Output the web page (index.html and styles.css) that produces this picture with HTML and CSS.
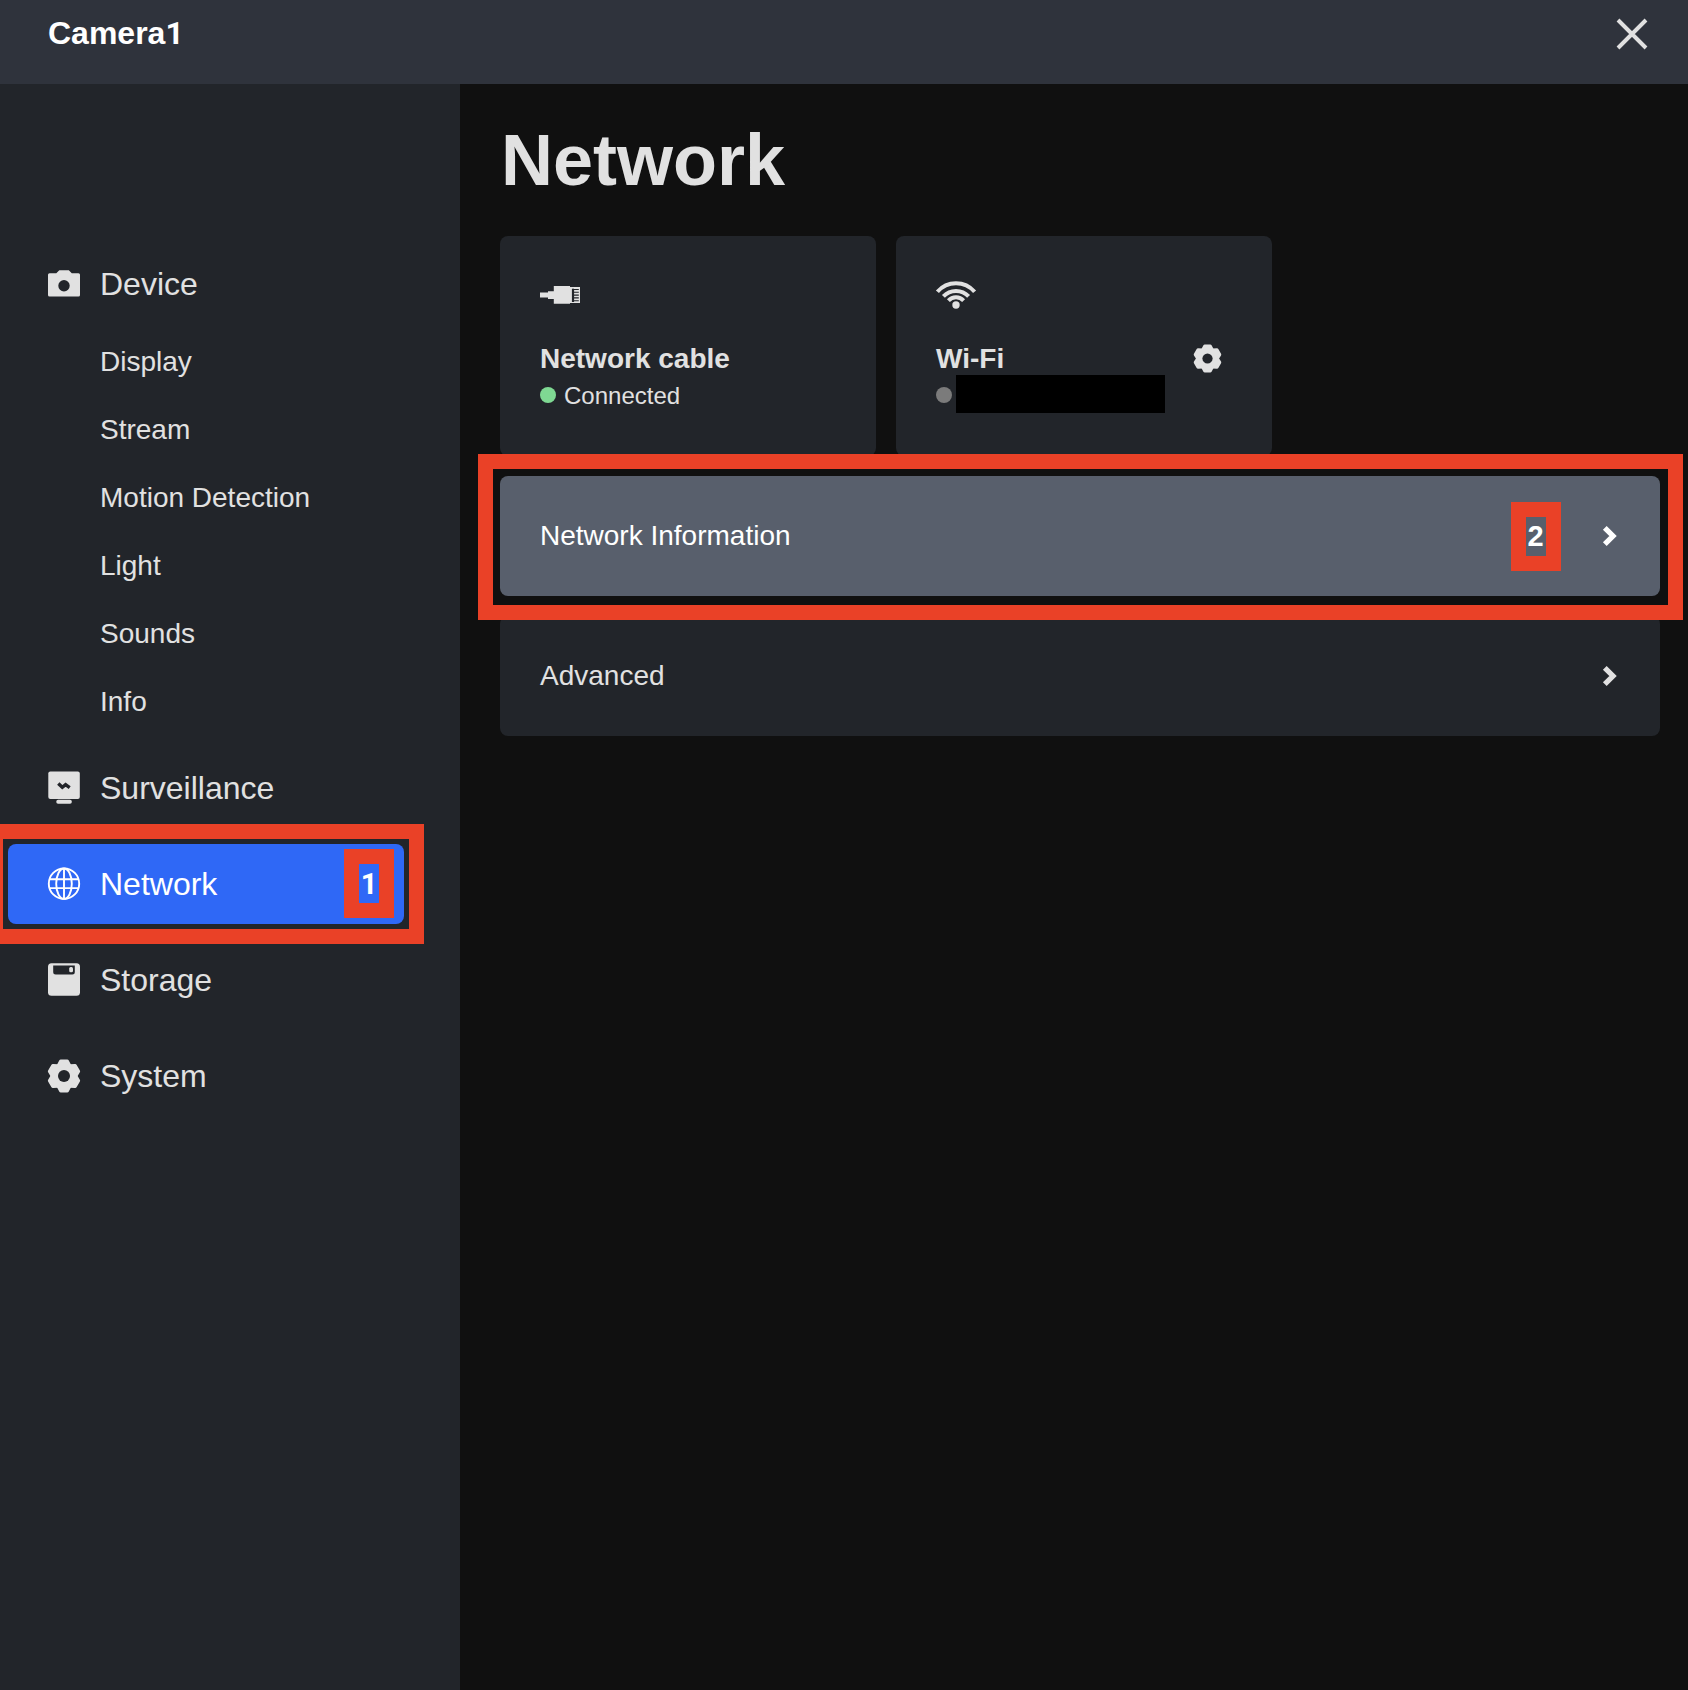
FILE: index.html
```html
<!DOCTYPE html>
<html lang="en">
<head>
<meta charset="utf-8">
<title>Camera1</title>
<link rel="stylesheet" href="styles.css">
</head>
<body>
<svg class="defs" aria-hidden="true">
  <mask id="gear-hole"><rect x="-20" y="-20" width="40" height="40" fill="#fff"/><circle r="6" fill="#000"/></mask>
  <symbol id="gear" viewBox="-17 -17 34 34">
    <g mask="url(#gear-hole)" fill="currentColor" stroke="currentColor" stroke-width="3.6" stroke-linejoin="round">
      <path id="tooth" d="M-3.2-14.7H3.2L5.7-10V10L3.2 14.7H-3.2L-5.7 10V-10Z"/>
      <use href="#tooth" transform="rotate(60)"/>
      <use href="#tooth" transform="rotate(120)"/>
    </g>
  </symbol>
  <symbol id="chevron" viewBox="0 0 20 24">
    <path d="M4.8 3.8 13 12 4.8 20.2" fill="none" stroke="currentColor" stroke-width="5.3"/>
  </symbol>
</svg>
<header class="header">
  <div class="device-name">Camera<span class="digit">1</span></div>
  <svg class="close" viewBox="0 0 32 32"><path d="M2 2 30 30M30 2 2 30" fill="none" stroke="currentColor" stroke-width="3.9"/></svg>
</header>
<div class="body">
  <nav class="sidebar">
    <a class="item">
      <svg class="icon" viewBox="0 0 32 32"><path fill="currentColor" fill-rule="evenodd" d="M1.5 5.3H8.3L11.3 2.2H20.8L23.8 5.3H30.5A1.5 1.5 0 0 1 32 6.8V27A1.5 1.5 0 0 1 30.5 28.500H1.500A1.500 1.500 0 0 1 0 27V6.800A1.500 1.500 0 0 1 1.500 5.300ZM16 12A5.700 5.700 0 1 0 16 23.400A5.700 5.700 0 1 0 16 12Z"/></svg>
      <span>Device</span>
    </a>
    <div class="subitems">
      <a class="subitem">Display</a>
      <a class="subitem">Stream</a>
      <a class="subitem">Motion Detection</a>
      <a class="subitem">Light</a>
      <a class="subitem">Sounds</a>
      <a class="subitem">Info</a>
    </div>
    <div class="group">
      <a class="item">
        <svg class="icon" viewBox="0 0 32 32"><rect x=".3" y="-.6" width="31.500" height="27.500" rx="2" fill="currentColor"/><rect x="8.300" y="27.800" width="15.500" height="4" rx="1.800" fill="currentColor"/><path d="M10.300 11.500 14.300 15.300 17.600 12.700 21.700 15.600" fill="none" stroke="#22252a" stroke-width="3.400"/></svg>
        <span>Surveillance</span>
      </a>
      <a class="item active">
        <svg class="icon" viewBox="0 0 32 32"><g fill="none" stroke="currentColor" stroke-width="1.900"><circle cx="16" cy="15.700" r="15.200"/><ellipse cx="16" cy="15.700" rx="7.800" ry="15.200"/><path d="M16 .5V31M2 11.200H30M2 20.100H30"/></g></svg>
        <span>Network</span>
        <span class="frame frame-nav"></span>
        <span class="badge badge-one">1</span>
      </a>
      <a class="item">
        <svg class="icon" viewBox="0 0 32 32"><rect y="-.7" width="32" height="32.500" rx="3.500" fill="currentColor"/><path d="M5.200 1.500H26.800V8A2.500 2.500 0 0 1 24.300 10.500H7.700A2.500 2.500 0 0 1 5.200 8Z" fill="#22252a"/><rect x="21.200" y="3" width="3.800" height="5.300" rx="1.500" fill="currentColor"/></svg>
        <span>Storage</span>
      </a>
      <a class="item">
        <svg class="icon gear"><use href="#gear"/></svg>
        <span>System</span>
      </a>
    </div>
  </nav>
  <main class="main">
    <h1 class="title">Network</h1>
    <section class="cards">
      <div class="card">
        <svg class="card-icon" viewBox="0 0 40 40"><path fill="currentColor" d="M0 16.500H8V15.300H13.800V10H30V11H40V27H30V27.700H13.800V23H8V21.600H0Z"/><path d="M33 12.700V26" stroke="#22252a" stroke-width="2.200"/><path d="M34 13.500H38.800M34 16.300H38.800M34 19.100H38.800M34 21.900H38.800M34 24.700H38.800" stroke="#22252a" stroke-width="1.100"/></svg>
        <div class="card-title">Network cable</div>
        <div class="status"><i class="dot on"></i><span class="status-text">Connected</span></div>
      </div>
      <div class="card">
        <svg class="card-icon" viewBox="0 0 40 40"><g fill="none" stroke="currentColor" stroke-width="4"><path d="M1.400 15.800A24.500 24.500 0 0 1 38.600 15.800"/><path d="M7.400 20.400A17.200 17.200 0 0 1 32.600 20.400"/><path d="M12.400 24.600A10.500 10.500 0 0 1 27.600 24.600"/></g><circle cx="20" cy="29" r="3.700" fill="currentColor"/></svg>
        <div class="card-title">Wi-Fi<svg class="settings"><use href="#gear"/></svg></div>
        <div class="status wifi-status"><i class="dot"></i><span class="redacted"></span></div>
      </div>
    </section>
    <section class="rows">
      <a class="row selected">
        <span>Network Information</span>
        <svg class="chevron"><use href="#chevron"/></svg>
        <span class="frame frame-row"></span>
        <span class="badge badge-two">2</span>
      </a>
      <a class="row">
        <span>Advanced</span>
        <svg class="chevron"><use href="#chevron"/></svg>
      </a>
    </section>
  </main>
</div>
</body>
</html>
```
FILE: styles.css
```css
* { box-sizing: border-box; }

body {
  margin: 0;
  height: 1690px;
  display: flex;
  flex-direction: column;
  overflow: hidden;
  background: #101010;
  color: #e1e1e1;
  font-family: "Liberation Sans", Arial, sans-serif;
}

svg { display: block; flex: none; overflow: visible; }
.defs { position: absolute; width: 0; height: 0; }

.header {
  flex: none;
  display: flex;
  justify-content: space-between;
  align-items: center;
  height: 84px;
  padding: 0 40px 17px 48px;
  background: #2f333c;
}

.device-name {
  padding-bottom: 2px;
  color: #fff;
  font-size: 32px;
  font-weight: 700;
  line-height: 36px;
}

/* a plain 1, with no foot */
.digit { font-family: Roboto, sans-serif; }

.close { width: 32px; height: 32px; }

.body { flex: 1; display: flex; min-height: 0; }

.sidebar {
  flex: none;
  width: 460px;
  padding: 160px 56px 0 8px;
  background: #22252a;
}

.item {
  position: relative;
  display: flex;
  align-items: center;
  gap: 20px;
  height: 80px;
  padding-left: 40px;
  border-radius: 8px;
  font-size: 32px;
}

.item.active { background: #2f68f6; color: #fff; }

.icon { width: 32px; height: 32px; }
.icon.gear { width: 34px; height: 34px; margin: 0 -1px 1px -1px; }

.subitems { padding: 4px 0 12px 92px; }

.subitem {
  display: flex;
  align-items: center;
  height: 68px;
  font-size: 28px;
}

.group { display: flex; flex-direction: column; gap: 16px; }

.main { flex: 1; padding: 36px 28px 0 40px; }

.title {
  margin: 0 0 36px;
  padding-left: 1px;
  font-size: 72px;
  line-height: 80px;
  font-weight: 700;
}

.cards { display: flex; gap: 20px; }

.card {
  width: 376px;
  height: 220px;
  padding: 40px 50px 0 40px;
  border-radius: 8px;
  background: #22252a;
}

.card-icon { width: 40px; height: 40px; margin-bottom: 25px; }

.card-title {
  display: flex;
  justify-content: space-between;
  align-items: center;
  height: 36px;
  font-size: 28px;
  font-weight: 700;
}

.settings { width: 29px; height: 29px; margin-bottom: 2px; }

.status {
  display: flex;
  align-items: center;
  gap: 8px;
  height: 36px;
  font-size: 24px;
}

.status-text { padding-top: 1px; }

.wifi-status { gap: 4px; }

.dot {
  width: 16px;
  height: 16px;
  border-radius: 50%;
  background: #7b7b7b;
}

.dot.on { background: #7fd993; }

.redacted { width: 209px; height: 38px; margin-top: -2px; background: #000; }

.rows { display: flex; flex-direction: column; gap: 20px; margin-top: 20px; }

.row {
  position: relative;
  display: flex;
  align-items: center;
  justify-content: space-between;
  height: 120px;
  padding: 0 40px;
  border-radius: 8px;
  background: #22252a;
  font-size: 28px;
}

.row.selected { z-index: 1; background: #585f6c; color: #fff; }

.chevron { width: 20px; height: 24px; }

/* step annotations laid over the page */
.frame { position: absolute; border: 15px solid #ea4127; }
.frame-nav { inset: -20px -20px -20px -20px; }
.frame-row { inset: -22px -23px -24px -22px; }

.badge {
  position: absolute;
  display: flex;
  align-items: center;
  justify-content: center;
  width: 50px;
  height: 69px;
  border: 15px solid #ea4127;
  color: #fff;
  font-size: 29px;
  font-weight: 700;
}

.badge-one { left: 336px; top: 5px; font-family: Roboto, sans-serif; }
.badge-two { left: 1011px; top: 26px; padding-right: 1px; }
```
